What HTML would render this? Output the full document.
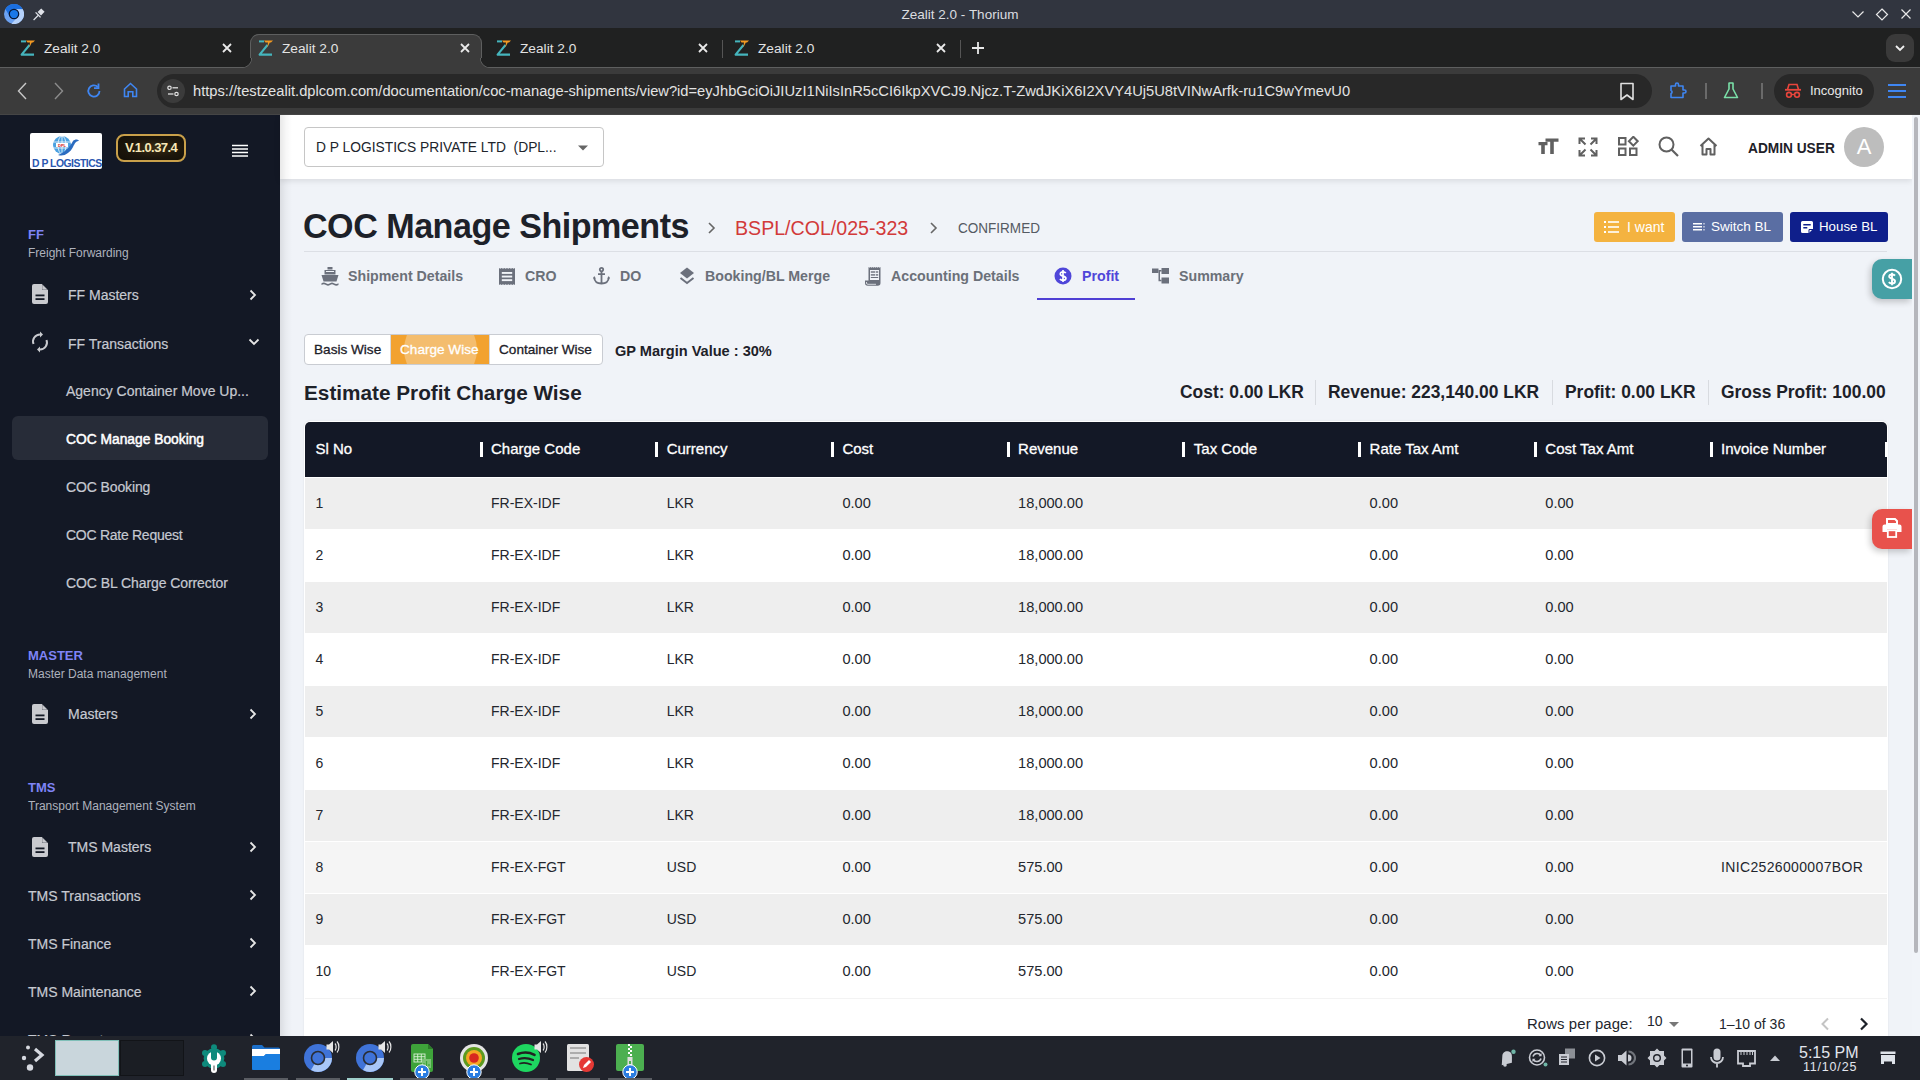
<!DOCTYPE html>
<html><head><meta charset="utf-8">
<style>
*{margin:0;padding:0;box-sizing:border-box}
html,body{width:1920px;height:1080px;overflow:hidden;background:#f0f3f8;font-family:"Liberation Sans",sans-serif}
.a{position:absolute}
.nw{white-space:nowrap}
/* chrome */
#titlebar{left:0;top:0;width:1920px;height:28px;background:#31353f}
#tabstrip{left:0;top:28px;width:1920px;height:40px;background:#202121}
#toolbar{left:0;top:68px;width:1920px;height:46px;background:#3b3b3b}
#page{left:0;top:114px;width:1920px;height:922px;background:#f0f3f8;overflow:hidden}
#taskbar{left:0;top:1036px;width:1920px;height:44px;background:#20232b}
#sidebar{left:0;top:0;width:280px;height:922px;background:#131825}
#header{left:280px;top:0;width:1632px;height:65px;background:#fff;box-shadow:0 2px 6px rgba(0,0,0,.10)}
.si{color:#c6c9d1;font-size:14px;line-height:16px;-webkit-text-stroke-width:0.2px}
.sec{color:#7f84f7;font-size:13px;font-weight:bold;line-height:15px}
.sub{color:#aeb2bd;font-size:12px;line-height:14px}
.tb{color:#6b7079;font-size:14.2px;font-weight:bold;line-height:20px}
.btn{border-radius:3px;height:30px}
.bt{color:#fff;font-size:14px;line-height:18px}
.sg{color:#1d2129;font-size:13.6px;line-height:16px;-webkit-text-stroke-width:0.3px}
.sm{color:#1d2129;font-size:19px;font-weight:bold;line-height:22px;transform:scaleX(0.917);transform-origin:0 0}
.th{color:#fff;font-size:15px;line-height:18px;-webkit-text-stroke-width:0.3px}
.td{color:#23262d;font-size:14px;line-height:18px}
.n{font-size:14.6px}
</style></head>
<body>

<div id="titlebar" class="a">
  <svg class="a" style="left:4px;top:4px" width="20" height="20" viewBox="0 0 20 20"><circle cx="10" cy="10" r="10" fill="#6ca2f2"/><path d="M10 5.2 L18.77 5.2 A10 10 0 0 0 1.34 5 L5.9 12.5Z" fill="#1b6fe0"/><path d="M10 5.2 L18.77 5.2 A10 10 0 0 1 7.4 19.65 L14.2 12.4Z" fill="#b5d1fa"/><circle cx="10" cy="10" r="4.7" fill="#1a78e8" stroke="#061633" stroke-width="1.2"/></svg>
  <svg class="a" style="left:32px;top:6px" width="14" height="16" viewBox="0 0 14 16"><path d="M9.2 2.4 L12.6 5.8 L9 9.4 L5.6 6Z" fill="#dfe2e8"/><path d="M3.6 6.4 L8.6 11.4" stroke="#dfe2e8" stroke-width="1.3"/><path d="M6.6 9 L1.6 14" stroke="#dfe2e8" stroke-width="1.2"/></svg>
  <div class="a nw" style="left:0;width:1920px;top:7px;text-align:center;color:#dcdde0;font-size:13.5px;line-height:16px">Zealit 2.0 - Thorium</div>
  <svg class="a" style="left:1850px;top:8px" width="64" height="14" viewBox="0 0 64 14"><path d="M2.5 3.5 L8 9 L13.5 3.5" fill="none" stroke="#e8e8e8" stroke-width="1.2"/><path d="M32 1 L37.5 6.5 L32 12 L26.5 6.5 Z" fill="none" stroke="#e8e8e8" stroke-width="1.2"/><path d="M51.5 1.5 L60.5 10.5 M60.5 1.5 L51.5 10.5" stroke="#e8e8e8" stroke-width="1.2"/></svg>
</div>
<div id="tabstrip" class="a">
  <div class="a" style="left:0;top:39px;width:1920px;height:1px;background:#5e5f5f"></div>
  <div class="a" style="left:250px;top:6px;width:232px;height:34px;background:#3b3b3b;border:1px solid #5e5f5f;border-bottom:none;border-radius:9px 9px 0 0"></div>
  <div class="a" style="left:242px;top:30px;width:10px;height:10px;background:radial-gradient(circle at 0 0,#202121 9px,#5e5f5f 9.5px,#3b3b3b 10.5px)"></div>
  <div class="a" style="left:480px;top:30px;width:10px;height:10px;background:radial-gradient(circle at 100% 0,#202121 9px,#5e5f5f 9.5px,#3b3b3b 10.5px)"></div>
  <div class="a" style="left:251px;top:38px;width:230px;height:2px;background:#3b3b3b"></div>
  <svg class="a" style="left:20px;top:12px" width="18" height="16" viewBox="0 0 18 16"><path d="M1 1.4 H6" stroke="#45b5bd" stroke-width="2"/><path d="M9.5 5 L1.6 14.6 H14" fill="none" stroke="#45b5bd" stroke-width="2.1" stroke-linejoin="round"/><path d="M6 0.4 H15 L13 2.6 H11.8 L9.3 7.5 L10 2.6 H7.5Z" fill="#f39a22"/></svg>
  <div class="a nw" style="left:44px;top:12px;color:#e3e3e3;font-size:13.7px;line-height:18px">Zealit 2.0</div>
  <svg class="a" style="left:221px;top:14px" width="12" height="12" viewBox="0 0 12 12"><path d="M2 2 L10 10 M10 2 L2 10" stroke="#eaeaea" stroke-width="1.8"/></svg>
<svg class="a" style="left:258px;top:12px" width="18" height="16" viewBox="0 0 18 16"><path d="M1 1.4 H6" stroke="#45b5bd" stroke-width="2"/><path d="M9.5 5 L1.6 14.6 H14" fill="none" stroke="#45b5bd" stroke-width="2.1" stroke-linejoin="round"/><path d="M6 0.4 H15 L13 2.6 H11.8 L9.3 7.5 L10 2.6 H7.5Z" fill="#f39a22"/></svg>
  <div class="a nw" style="left:282px;top:12px;color:#e3e3e3;font-size:13.7px;line-height:18px">Zealit 2.0</div>
  <svg class="a" style="left:459px;top:14px" width="12" height="12" viewBox="0 0 12 12"><path d="M2 2 L10 10 M10 2 L2 10" stroke="#eaeaea" stroke-width="1.8"/></svg>
<svg class="a" style="left:496px;top:12px" width="18" height="16" viewBox="0 0 18 16"><path d="M1 1.4 H6" stroke="#45b5bd" stroke-width="2"/><path d="M9.5 5 L1.6 14.6 H14" fill="none" stroke="#45b5bd" stroke-width="2.1" stroke-linejoin="round"/><path d="M6 0.4 H15 L13 2.6 H11.8 L9.3 7.5 L10 2.6 H7.5Z" fill="#f39a22"/></svg>
  <div class="a nw" style="left:520px;top:12px;color:#e3e3e3;font-size:13.7px;line-height:18px">Zealit 2.0</div>
  <svg class="a" style="left:697px;top:14px" width="12" height="12" viewBox="0 0 12 12"><path d="M2 2 L10 10 M10 2 L2 10" stroke="#eaeaea" stroke-width="1.8"/></svg>
<svg class="a" style="left:734px;top:12px" width="18" height="16" viewBox="0 0 18 16"><path d="M1 1.4 H6" stroke="#45b5bd" stroke-width="2"/><path d="M9.5 5 L1.6 14.6 H14" fill="none" stroke="#45b5bd" stroke-width="2.1" stroke-linejoin="round"/><path d="M6 0.4 H15 L13 2.6 H11.8 L9.3 7.5 L10 2.6 H7.5Z" fill="#f39a22"/></svg>
  <div class="a nw" style="left:758px;top:12px;color:#e3e3e3;font-size:13.7px;line-height:18px">Zealit 2.0</div>
  <svg class="a" style="left:935px;top:14px" width="12" height="12" viewBox="0 0 12 12"><path d="M2 2 L10 10 M10 2 L2 10" stroke="#eaeaea" stroke-width="1.8"/></svg>

  <div class="a" style="left:722px;top:12px;width:1px;height:18px;background:#555"></div>
  <div class="a" style="left:960px;top:12px;width:1px;height:18px;background:#555"></div>
  <svg class="a" style="left:970px;top:12px" width="16" height="16" viewBox="0 0 16 16"><path d="M8 2 V14 M2 8 H14" stroke="#e8e8e8" stroke-width="1.8"/></svg>
  <div class="a" style="left:1886px;top:6px;width:28px;height:28px;background:#3a3a3a;border-radius:9px"></div>
  <svg class="a" style="left:1893px;top:13px" width="14" height="14" viewBox="0 0 14 14"><path d="M3 5 L7 9 L11 5" fill="none" stroke="#f0f0f0" stroke-width="1.8"/></svg>
</div>
<div id="toolbar" class="a">
  <svg class="a" style="left:14px;top:13px" width="18" height="20" viewBox="0 0 18 20"><path d="M12 2 L4.5 10 L12 18" fill="none" stroke="#c8c8c8" stroke-width="1.4"/></svg>
  <svg class="a" style="left:50px;top:13px" width="18" height="20" viewBox="0 0 18 20"><path d="M5 2 L12.5 10 L5 18" fill="none" stroke="#8c8c8c" stroke-width="1.4"/></svg>
  <svg class="a" style="left:85px;top:14px" width="18" height="18" viewBox="0 0 18 18"><path d="M14.5 9 A5.6 5.6 0 1 1 12.8 5" fill="none" stroke="#3f86f2" stroke-width="1.8"/><path d="M13.5 1.5 V6.2 H9" fill="none" stroke="#3f86f2" stroke-width="1.8"/></svg>
  <svg class="a" style="left:121px;top:13px" width="18" height="18" viewBox="0 0 18 18"><path d="M3.5 15.5 V8 L9.5 2.5 L15.5 8 V15.5 H11.8 V10.8 H7.2 V15.5 Z" fill="none" stroke="#3f86f2" stroke-width="1.6" stroke-linejoin="miter"/></svg>
  <div class="a" style="left:157px;top:6px;width:1495px;height:34px;background:#282828;border-radius:17px"></div>
  <div class="a" style="left:161px;top:11px;width:24px;height:24px;background:#3b3b3b;border-radius:12px"></div>
  <svg class="a" style="left:166px;top:16px" width="14" height="14" viewBox="0 0 14 14"><circle cx="3.5" cy="3.8" r="1.7" fill="none" stroke="#e0e0e0" stroke-width="1.2"/><path d="M6.5 3.8 H12" stroke="#e0e0e0" stroke-width="1.3"/><circle cx="10.5" cy="10" r="1.7" fill="none" stroke="#e0e0e0" stroke-width="1.2"/><path d="M2 10 H7.5" stroke="#e0e0e0" stroke-width="1.3"/></svg>
  <div class="a nw" style="left:193px;top:14px;color:#e3e3e3;font-size:14.7px;line-height:18px">https://testzealit.dplcom.com/documentation/coc-manage-shipments/view?id=eyJhbGciOiJIUzI1NiIsInR5cCI6IkpXVCJ9.Njcz.T-ZwdJKiX6I2XVY4Uj5U8tVINwArfk-ru1C9wYmevU0</div>
  <svg class="a" style="left:1619px;top:14px" width="16" height="20" viewBox="0 0 16 20"><path d="M2 1.5 H14 V17.5 L8 13 L2 17.5 Z" fill="none" stroke="#e0e0e0" stroke-width="1.6" stroke-linejoin="round"/></svg>
  <svg class="a" style="left:1668px;top:13px" width="20" height="20" viewBox="0 0 20 20"><path d="M3 5 H7.5 V3.5 A1.5 1.5 0 0 1 10.5 3.5 V5 H15 V9 H16.5 A1.5 1.5 0 0 1 16.5 12 H15 V16.5 H3 V12.5 A1.6 1.6 0 0 0 3 9.5 Z" fill="none" stroke="#3f86f2" stroke-width="1.6" stroke-linejoin="round"/></svg>
  <div class="a" style="left:1705px;top:15px;width:2px;height:16px;background:#6a6a6a"></div>
  <svg class="a" style="left:1722px;top:13px" width="18" height="20" viewBox="0 0 18 20"><path d="M6.5 2 H11.5 M7 2 V8 L2.5 16.5 H15.5 L11 8 V2" fill="none" stroke="#7ae0a8" stroke-width="1.6" stroke-linejoin="round"/></svg>
  <div class="a" style="left:1761px;top:15px;width:2px;height:16px;background:#6a6a6a"></div>
  <div class="a" style="left:1774px;top:6px;width:100px;height:34px;background:#282828;border-radius:17px"></div>
  <svg class="a" style="left:1784px;top:14px" width="18" height="18" viewBox="0 0 18 18"><path d="M3.5 7.5 L5 2.5 H13 L14.5 7.5" fill="none" stroke="#e8453c" stroke-width="1.6"/><path d="M1 7.8 H17" stroke="#e8453c" stroke-width="1.8"/><circle cx="5" cy="12.8" r="2.4" fill="none" stroke="#e8453c" stroke-width="1.6"/><circle cx="13" cy="12.8" r="2.4" fill="none" stroke="#e8453c" stroke-width="1.6"/><path d="M7.4 12.5 H10.6" stroke="#e8453c" stroke-width="1.4"/></svg>
  <div class="a nw" style="left:1810px;top:14px;color:#e8e8e8;font-size:13px;line-height:18px">Incognito</div>
  <svg class="a" style="left:1887px;top:14px" width="20" height="18" viewBox="0 0 20 18"><path d="M1 3 H19 M1 9 H19 M1 15 H19" stroke="#3f86f2" stroke-width="1.8"/></svg>
</div>

<div id="page" class="a">
  <div id="sidebar" class="a">
<div class="a" style="left:30px;top:19px;width:72px;height:36px;background:#fff;border-radius:2px"></div>
<svg class="a" style="left:46px;top:21px" width="36" height="24" viewBox="0 0 36 24"><circle cx="16" cy="10" r="9" fill="#4aa0e0"/><g stroke="#fff" stroke-width="0.8" fill="none"><ellipse cx="16" cy="10" rx="4" ry="9"/><path d="M7 7 H25 M7 13 H25 M16 1 V19"/></g><rect x="10" y="8" width="12" height="4" fill="#fff"/><text x="16" y="11.5" font-size="4" fill="#d02020" text-anchor="middle" font-family="Liberation Sans" font-weight="bold">DPL</text><path d="M12 20 C18 18 24 12 27 6 C29 4 32 4 33 6 C30 6 29 8 27 12 C24 18 18 22 12 20Z" fill="#2b6cc0"/></svg>
<div class="a nw" style="left:32px;top:43px;color:#2a57b0;font-size:10.5px;font-weight:bold;line-height:12px;letter-spacing:-0.5px;transform:scaleX(0.99);transform-origin:0 0">D P LOGISTICS</div>
<div class="a" style="left:116px;top:20px;width:70px;height:28px;border:2px solid #c9a04a;border-radius:8px;background:radial-gradient(ellipse at 55% 50%,#3a2d14 0%,#1c160b 55%,#120f08 100%)"></div>
<div class="a nw" style="left:116px;top:26px;width:70px;text-align:center;color:#f7e8b8;font-size:13px;font-weight:bold;line-height:16px;letter-spacing:-0.6px">V.1.0.37.4</div>
<svg class="a" style="left:232px;top:30px" width="16" height="14" viewBox="0 0 16 14"><path d="M0 1.5 H16 M0 5 H16 M0 8.5 H16 M0 12 H16" stroke="#fff" stroke-width="1.6"/></svg>
<div class="a nw sec" style="left:28px;top:113px">FF</div><div class="a nw sub" style="left:28px;top:132px">Freight Forwarding</div><svg class="a" style="left:32px;top:170px" width="16" height="20" viewBox="0 0 16 20"><path d="M2 0 H10 L16 6 V18 A2 2 0 0 1 14 20 H2 A2 2 0 0 1 0 18 V2 A2 2 0 0 1 2 0Z" fill="#c9cacf"/><path d="M10 0 V6 H16" fill="#131825"/><path d="M10.2 0.5 L15.5 5.8 H10.2Z" fill="#c9cacf"/><rect x="3.5" y="10.5" width="9" height="1.8" fill="#131825"/><rect x="3.5" y="14.2" width="9" height="1.8" fill="#131825"/></svg><div class="a nw si" style="left:68px;top:173px">FF Masters</div><svg class="a" style="left:249px;top:175px" width="8" height="12" viewBox="0 0 8 12"><path d="M1.5 1.5 L6 6 L1.5 10.5" fill="none" stroke="#e6e6e6" stroke-width="1.8"/></svg><svg class="a" style="left:31px;top:217px" width="18" height="22" viewBox="0 0 18 22"><path d="M9 3.5 A7 7 0 0 0 2.5 13" fill="none" stroke="#c9cacf" stroke-width="2"/><path d="M9 0.5 L12 3.5 L9 6.5Z" fill="#c9cacf"/><path d="M9 18.5 A7 7 0 0 0 15.5 9" fill="none" stroke="#c9cacf" stroke-width="2"/><path d="M9 15.5 L6 18.5 L9 21.5Z" fill="#c9cacf"/></svg><div class="a nw si" style="left:68px;top:222px">FF Transactions</div><svg class="a" style="left:248px;top:224px" width="12" height="8" viewBox="0 0 12 8"><path d="M1.5 1.5 L6 6 L10.5 1.5" fill="none" stroke="#e6e6e6" stroke-width="1.8"/></svg><div class="a nw si" style="left:66px;top:269px">Agency Container Move Up...</div><div class="a" style="left:12px;top:302px;width:256px;height:44px;background:#272c38;border-radius:6px"></div><div class="a nw si" style="left:66px;top:318px;color:#fff;font-size:13.8px;-webkit-text-stroke-width:0.5px;letter-spacing:0px">COC Manage Booking</div><div class="a nw si" style="left:66px;top:365px;letter-spacing:-0.12px">COC Booking</div><div class="a nw si" style="left:66px;top:413px;letter-spacing:-0.27px">COC Rate Request</div><div class="a nw si" style="left:66px;top:461px;letter-spacing:-0.08px">COC BL Charge Corrector</div><div class="a nw sec" style="left:28px;top:534px">MASTER</div><div class="a nw sub" style="left:28px;top:553px">Master Data management</div><svg class="a" style="left:32px;top:590px" width="16" height="20" viewBox="0 0 16 20"><path d="M2 0 H10 L16 6 V18 A2 2 0 0 1 14 20 H2 A2 2 0 0 1 0 18 V2 A2 2 0 0 1 2 0Z" fill="#c9cacf"/><path d="M10 0 V6 H16" fill="#131825"/><path d="M10.2 0.5 L15.5 5.8 H10.2Z" fill="#c9cacf"/><rect x="3.5" y="10.5" width="9" height="1.8" fill="#131825"/><rect x="3.5" y="14.2" width="9" height="1.8" fill="#131825"/></svg><div class="a nw si" style="left:68px;top:592px">Masters</div><svg class="a" style="left:249px;top:594px" width="8" height="12" viewBox="0 0 8 12"><path d="M1.5 1.5 L6 6 L1.5 10.5" fill="none" stroke="#e6e6e6" stroke-width="1.8"/></svg><div class="a nw sec" style="left:28px;top:666px">TMS</div><div class="a nw sub" style="left:28px;top:685px">Transport Management System</div><svg class="a" style="left:32px;top:723px" width="16" height="20" viewBox="0 0 16 20"><path d="M2 0 H10 L16 6 V18 A2 2 0 0 1 14 20 H2 A2 2 0 0 1 0 18 V2 A2 2 0 0 1 2 0Z" fill="#c9cacf"/><path d="M10 0 V6 H16" fill="#131825"/><path d="M10.2 0.5 L15.5 5.8 H10.2Z" fill="#c9cacf"/><rect x="3.5" y="10.5" width="9" height="1.8" fill="#131825"/><rect x="3.5" y="14.2" width="9" height="1.8" fill="#131825"/></svg><div class="a nw si" style="left:68px;top:725px">TMS Masters</div><svg class="a" style="left:249px;top:727px" width="8" height="12" viewBox="0 0 8 12"><path d="M1.5 1.5 L6 6 L1.5 10.5" fill="none" stroke="#e6e6e6" stroke-width="1.8"/></svg><div class="a nw si" style="left:28px;top:774px">TMS Transactions</div><svg class="a" style="left:249px;top:775px" width="8" height="12" viewBox="0 0 8 12"><path d="M1.5 1.5 L6 6 L1.5 10.5" fill="none" stroke="#e6e6e6" stroke-width="1.8"/></svg><div class="a nw si" style="left:28px;top:822px">TMS Finance</div><svg class="a" style="left:249px;top:823px" width="8" height="12" viewBox="0 0 8 12"><path d="M1.5 1.5 L6 6 L1.5 10.5" fill="none" stroke="#e6e6e6" stroke-width="1.8"/></svg><div class="a nw si" style="left:28px;top:870px">TMS Maintenance</div><svg class="a" style="left:249px;top:871px" width="8" height="12" viewBox="0 0 8 12"><path d="M1.5 1.5 L6 6 L1.5 10.5" fill="none" stroke="#e6e6e6" stroke-width="1.8"/></svg><div class="a nw si" style="left:28px;top:918px">TMS Reports</div><svg class="a" style="left:249px;top:919px" width="8" height="12" viewBox="0 0 8 12"><path d="M1.5 1.5 L6 6 L1.5 10.5" fill="none" stroke="#e6e6e6" stroke-width="1.8"/></svg></div>

  <div id="header" class="a">
  <div class="a" style="left:24px;top:13px;width:300px;height:40px;border:1px solid #c6c6c6;border-radius:4px;background:#fff"></div>
  <div class="a nw" style="left:36px;top:24px;color:#20242c;font-size:15px;line-height:18px;transform:scaleX(0.92);transform-origin:0 0">D P LOGISTICS PRIVATE LTD&nbsp;&nbsp;(DPL...</div>
  <svg class="a" style="left:297px;top:30px" width="12" height="8" viewBox="0 0 12 8"><path d="M1 1.5 H11 L6 6.5Z" fill="#666"/></svg>
  <svg class="a" style="left:1258px;top:24px" width="21" height="17" viewBox="0 0 21 17"><path d="M0.5 4 H9.5 V7.2 H6.8 V16 H3.2 V7.2 H0.5Z M7.5 0.5 H20.5 V3.8 H15.8 V16 H12.2 V3.8 H7.5Z" fill="#606060"/></svg>
  <svg class="a" style="left:1298px;top:23px" width="20" height="20" viewBox="0 0 20 20"><g fill="none" stroke="#606060" stroke-width="2"><path d="M1.5 7 V1.5 H7 M1.5 1.5 L7.5 7.5"/><path d="M18.5 7 V1.5 H13 M18.5 1.5 L12.5 7.5"/><path d="M1.5 13 V18.5 H7 M1.5 18.5 L7.5 12.5"/><path d="M18.5 13 V18.5 H13 M18.5 18.5 L12.5 12.5"/></g></svg>
  <svg class="a" style="left:1338px;top:22px" width="21" height="21" viewBox="0 0 21 21"><g fill="none" stroke="#606060" stroke-width="2"><rect x="1" y="2" width="6.5" height="6.5"/><rect x="1" y="12.5" width="6.5" height="6.5"/><rect x="12" y="12.5" width="6.5" height="6.5"/><path d="M15.3 0.8 L19.7 5.2 L15.3 9.6 L10.9 5.2Z"/></g></svg>
  <svg class="a" style="left:1378px;top:22px" width="21" height="21" viewBox="0 0 21 21"><circle cx="8.5" cy="8.5" r="7" fill="none" stroke="#606060" stroke-width="2"/><path d="M13.5 13.5 L20 20" stroke="#606060" stroke-width="2.2"/></svg>
  <svg class="a" style="left:1418px;top:23px" width="21" height="19" viewBox="0 0 21 19"><path d="M2.5 9 L10.5 1.5 L18.5 9 M4.5 7.5 V17.5 H8.5 V12 H12.5 V17.5 H16.5 V7.5" fill="none" stroke="#606060" stroke-width="2" stroke-linejoin="round"/></svg>
  <div class="a nw" style="left:1468px;top:25px;color:#1e2128;font-size:14.5px;font-weight:bold;line-height:18px;transform:scaleX(0.945);transform-origin:0 0">ADMIN USER</div>
  <div class="a" style="left:1564px;top:13px;width:40px;height:40px;border-radius:20px;background:#bdbdbd"></div>
  <div class="a nw" style="left:1564px;top:21px;width:40px;text-align:center;color:#fff;font-size:22px;line-height:24px">A</div>
</div>
<div id="content" class="a" style="left:0;top:0;width:1920px;height:922px">
  <div class="a nw" style="left:303px;top:92px;color:#1d2129;font-size:34.5px;font-weight:bold;line-height:40px;letter-spacing:-0.5px;transform:scaleX(0.988);transform-origin:0 0">COC Manage Shipments</div>
  <svg class="a" style="left:707px;top:108px" width="10" height="12" viewBox="0 0 10 12"><path d="M2 1 L7 6 L2 11" fill="none" stroke="#666" stroke-width="1.6"/></svg>
  <div class="a nw" style="left:735px;top:103px;color:#d23a3a;font-size:19.6px;line-height:22px">BSPL/COL/025-323</div>
  <svg class="a" style="left:929px;top:108px" width="10" height="12" viewBox="0 0 10 12"><path d="M2 1 L7 6 L2 11" fill="none" stroke="#666" stroke-width="1.6"/></svg>
  <div class="a nw" style="left:958px;top:104px;color:#555a63;font-size:15.5px;line-height:20px;transform:scaleX(0.873);transform-origin:0 0">CONFIRMED</div>
  <div class="a" style="left:304px;top:137px;width:1583px;height:1px;background:#dcdfe5"></div>
  <div class="a btn" style="left:1594px;top:98px;width:81px;background:#f4b340"></div>
  <svg class="a" style="left:1604px;top:107px" width="15" height="12" viewBox="0 0 15 12"><g fill="#fff"><rect x="0" y="0" width="2" height="2"/><rect x="0" y="5" width="2" height="2"/><rect x="0" y="10" width="2" height="2"/><rect x="4" y="0.2" width="11" height="1.6"/><rect x="4" y="5.2" width="11" height="1.6"/><rect x="4" y="10.2" width="11" height="1.6"/></g></svg>
  <div class="a nw bt" style="left:1627px;top:104px">I want</div>
  <div class="a btn" style="left:1682px;top:98px;width:101px;background:#5a6ea3"></div>
  <svg class="a" style="left:1693px;top:109px" width="12" height="8" viewBox="0 0 12 8"><g fill="#fff"><rect x="0" y="0" width="9" height="1.5"/><rect x="0" y="3" width="9" height="1.5"/><rect x="0" y="6" width="9" height="1.5"/><rect x="10.5" y="0" width="1" height="1.5"/><rect x="10.5" y="3" width="1" height="1.5"/><rect x="10.5" y="6" width="1" height="1.5"/></g></svg>
  <div class="a nw bt" style="left:1711px;top:104px;font-size:13.5px">Switch BL</div>
  <div class="a btn" style="left:1790px;top:98px;width:98px;background:#0f1f8b"></div>
  <svg class="a" style="left:1801px;top:107px" width="12" height="12" viewBox="0 0 12 12"><path d="M1.5 0 H10.5 A1.5 1.5 0 0 1 12 1.5 V8 L8 12 H1.5 A1.5 1.5 0 0 1 0 10.5 V1.5 A1.5 1.5 0 0 1 1.5 0Z" fill="#fff"/><rect x="2.3" y="3" width="7.4" height="1.5" fill="#0f1f8b"/><rect x="2.3" y="6" width="4" height="1.5" fill="#0f1f8b"/><path d="M8 12 V8.5 H12" fill="none" stroke="#0f1f8b" stroke-width="1"/></svg>
  <div class="a nw bt" style="left:1819px;top:104px;font-size:13.3px">House BL</div>

<svg class="a" style="left:321px;top:153px" width="18" height="19" viewBox="0 0 18 19"><g fill="#6b707c"><rect x="6.5" y="0" width="5" height="2.5"/><path d="M3.5 3 H14.5 V7.5 H3.5Z"/><path d="M0.5 8 H17.5 L15.5 14.5 H2.5Z"/><path d="M0.5 16.2 C2 15.2 3.5 15.2 5 16.2 C6.5 17.2 7.5 17.2 9 16.2 C10.5 15.2 11.5 15.2 13 16.2 C14.5 17.2 16 17.2 17.5 16.2 V18 C16 19 14.5 19 13 18 C11.5 17 10.5 17 9 18 C7.5 19 6.5 19 5 18 C3.5 17 2 17 0.5 18Z"/></g><path d="M5 4.5 H13" stroke="#f0f3f8" stroke-width="1"/></svg>
  <div class="a nw tb" style="left:348px;top:152px">Shipment Details</div>
  <svg class="a" style="left:499px;top:154px" width="16" height="17" viewBox="0 0 16 17"><path d="M0 0 L1.3 0.8 L2.6 0 L4 0.8 L5.3 0 L6.6 0.8 L8 0 L9.3 0.8 L10.6 0 L12 0.8 L13.3 0 L14.6 0.8 L16 0 V17 L14.6 16.2 L13.3 17 L12 16.2 L10.6 17 L9.3 16.2 L8 17 L6.6 16.2 L5.3 17 L4 16.2 L2.6 17 L1.3 16.2 L0 17Z" fill="#6b707c"/><g fill="#f0f3f8"><rect x="2.8" y="4" width="10.4" height="1.9"/><rect x="2.8" y="7.6" width="10.4" height="1.9"/><rect x="2.8" y="11.2" width="10.4" height="1.9"/></g></svg>
  <div class="a nw tb" style="left:525px;top:152px">CRO</div>
  <svg class="a" style="left:593px;top:153px" width="17" height="18" viewBox="0 0 17 18"><g fill="none" stroke="#6b707c" stroke-width="1.8"><circle cx="8.5" cy="2.6" r="1.7"/><path d="M8.5 4.3 V16.5 M5 7.2 H12 M1.2 10.5 C1.5 14.5 4.5 16.5 8.5 16.5 C12.5 16.5 15.5 14.5 15.8 10.5"/></g><path d="M0 11.5 L1.2 9 L2.8 11.5Z M14.2 11.5 L15.8 9 L17 11.5Z" fill="#6b707c"/></svg>
  <div class="a nw tb" style="left:620px;top:152px">DO</div>
  <svg class="a" style="left:679px;top:153px" width="16" height="18" viewBox="0 0 16 18"><path d="M8 0.5 L15 6 L8 11.5 L1 6Z" fill="#6b707c"/><path d="M1.5 11 L8 16 L14.5 11" fill="none" stroke="#6b707c" stroke-width="1.9"/></svg>
  <div class="a nw tb" style="left:705px;top:152px">Booking/BL Merge</div>
  <svg class="a" style="left:865px;top:153px" width="16" height="19" viewBox="0 0 16 19"><path d="M3.5 0 L4.5 0.8 L5.5 0 L6.5 0.8 L7.5 0 L8.5 0.8 L9.5 0 L10.5 0.8 L11.5 0 L12.5 0.8 L13.5 0 L14.5 0.8 L15.5 0 V16 A2.8 2.8 0 0 1 12.7 18.8 H2.8 A2.8 2.8 0 0 1 0 16 V13.5 H3.5Z" fill="#6b707c"/><rect x="5" y="3" width="9" height="10" fill="#f0f3f8"/><g fill="#6b707c"><rect x="5.8" y="4.3" width="4.5" height="1.4"/><rect x="11" y="4.3" width="2.2" height="1.4"/><rect x="5.8" y="7.2" width="4.5" height="1.4"/><rect x="11" y="7.2" width="2.2" height="1.4"/><rect x="5.8" y="10" width="7.4" height="1"/></g><path d="M1.5 15 V16 A1.3 1.3 0 0 0 2.8 17.3 H11" fill="none" stroke="#f0f3f8" stroke-width="0.8"/></svg>
  <div class="a nw tb" style="left:891px;top:152px">Accounting Details</div>
  <svg class="a" style="left:1054px;top:153px" width="18" height="18" viewBox="0 0 18 18"><circle cx="9" cy="9" r="8.5" fill="#4f46d9"/><path d="M11.8 6.2 C11.3 5.3 10.3 4.8 9 4.8 C7.4 4.8 6.3 5.6 6.3 6.9 C6.3 9.6 11.9 8.6 11.9 11.3 C11.9 12.6 10.7 13.3 9 13.3 C7.5 13.3 6.5 12.7 6 11.8 M9 3 V15" fill="none" stroke="#fff" stroke-width="1.7"/></svg>
  <div class="a nw tb" style="left:1082px;top:152px;color:#4f46d9">Profit</div>
  <div class="a" style="left:1037px;top:184px;width:98px;height:2px;background:#4f3fd4"></div>
  <svg class="a" style="left:1152px;top:154px" width="18" height="16" viewBox="0 0 18 16"><g fill="#6b707c"><rect x="0" y="0.5" width="6.5" height="4.5"/><rect x="9.5" y="0" width="7.5" height="6"/><rect x="9.5" y="9.5" width="7.5" height="6"/><path d="M6.5 2 H9.5 V3.5 H8 V11.8 H9.5 V13.3 H6.5Z"/></g></svg>
  <div class="a nw tb" style="left:1179px;top:152px">Summary</div>
<div class="a" style="left:304px;top:220px;width:299px;height:31px;border:1px solid #c9ccd2;border-radius:4px;background:#fff;overflow:hidden">
    <div class="a" style="left:86px;top:0;width:98px;height:29px;background:#f2a22f;overflow:hidden"><div class="a" style="left:13px;top:-22px;width:73px;height:73px;border-radius:50%;background:#f4bd6e"></div></div>
    <div class="a" style="left:85px;top:0;width:1px;height:29px;background:#d7d9dd"></div>
    <div class="a" style="left:184px;top:0;width:1px;height:29px;background:#d7d9dd"></div>
  </div>
  <div class="a nw sg" style="left:314px;top:228px">Basis Wise</div>
  <div class="a nw sg" style="left:400px;top:228px;color:#fff">Charge Wise</div>
  <div class="a nw sg" style="left:499px;top:228px">Container Wise</div>
  <div class="a nw" style="left:615px;top:228px;color:#1d2129;font-size:15.5px;font-weight:bold;line-height:18px;transform:scaleX(0.94);transform-origin:0 0">GP Margin Value : 30%</div>
  <div class="a nw" style="left:304px;top:267px;color:#1d2129;font-size:20.75px;font-weight:bold;line-height:24px">Estimate Profit Charge Wise</div>
  <div class="a nw sm" style="left:1180px;top:267px">Cost: 0.00 LKR</div>
  <div class="a" style="left:1315px;top:266px;width:1px;height:25px;background:#d8dbe0"></div>
  <div class="a nw sm" style="left:1328px;top:267px">Revenue: 223,140.00 LKR</div>
  <div class="a" style="left:1552px;top:266px;width:1px;height:25px;background:#d8dbe0"></div>
  <div class="a nw sm" style="left:1565px;top:267px">Profit: 0.00 LKR</div>
  <div class="a" style="left:1708px;top:266px;width:1px;height:25px;background:#d8dbe0"></div>
  <div class="a nw sm" style="left:1721px;top:267px">Gross Profit: 100.00</div>
<div class="a" style="left:304px;top:307px;width:1584px;height:640px;background:#fff;border-radius:6px 6px 0 0;box-shadow:0 0 2px rgba(0,0,0,.10)"></div>
<div class="a" style="left:305px;top:308px;width:1582px;height:55px;background:#131826;border-radius:5px 5px 0 0"></div>
<div class="a nw th" style="left:315.5px;top:326px">Sl No</div>
<div class="a" style="left:479.5px;top:328px;width:3px;height:15px;background:#fff"></div>
<div class="a nw th" style="left:491.0px;top:326px">Charge Code</div>
<div class="a" style="left:655.2px;top:328px;width:3px;height:15px;background:#fff"></div>
<div class="a nw th" style="left:666.7px;top:326px">Currency</div>
<div class="a" style="left:830.9px;top:328px;width:3px;height:15px;background:#fff"></div>
<div class="a nw th" style="left:842.4px;top:326px">Cost</div>
<div class="a" style="left:1006.6px;top:328px;width:3px;height:15px;background:#fff"></div>
<div class="a nw th" style="left:1018.1px;top:326px">Revenue</div>
<div class="a" style="left:1182.3px;top:328px;width:3px;height:15px;background:#fff"></div>
<div class="a nw th" style="left:1193.8px;top:326px">Tax Code</div>
<div class="a" style="left:1358.1px;top:328px;width:3px;height:15px;background:#fff"></div>
<div class="a nw th" style="left:1369.6px;top:326px">Rate Tax Amt</div>
<div class="a" style="left:1533.8px;top:328px;width:3px;height:15px;background:#fff"></div>
<div class="a nw th" style="left:1545.3px;top:326px">Cost Tax Amt</div>
<div class="a" style="left:1709.5px;top:328px;width:3px;height:15px;background:#fff"></div>
<div class="a nw th" style="left:1721.0px;top:326px">Invoice Number</div>
<div class="a" style="left:1885px;top:328px;width:2px;height:15px;background:#fff"></div>
<div class="a" style="left:305px;top:364px;width:1582px;height:51px;background:#eeeeee"></div>
<div class="a nw td" style="left:315.5px;top:380px">1</div>
<div class="a nw td" style="left:491.0px;top:380px">FR-EX-IDF</div>
<div class="a nw td" style="left:666.7px;top:380px">LKR</div>
<div class="a nw td n" style="left:842.4px;top:380px">0.00</div>
<div class="a nw td n" style="left:1018.1px;top:380px">18,000.00</div>
<div class="a nw td n" style="left:1369.6px;top:380px">0.00</div>
<div class="a nw td n" style="left:1545.3px;top:380px">0.00</div>
<div class="a" style="left:305px;top:416px;width:1582px;height:51px;background:#ffffff"></div>
<div class="a nw td" style="left:315.5px;top:432px">2</div>
<div class="a nw td" style="left:491.0px;top:432px">FR-EX-IDF</div>
<div class="a nw td" style="left:666.7px;top:432px">LKR</div>
<div class="a nw td n" style="left:842.4px;top:432px">0.00</div>
<div class="a nw td n" style="left:1018.1px;top:432px">18,000.00</div>
<div class="a nw td n" style="left:1369.6px;top:432px">0.00</div>
<div class="a nw td n" style="left:1545.3px;top:432px">0.00</div>
<div class="a" style="left:305px;top:468px;width:1582px;height:51px;background:#eeeeee"></div>
<div class="a nw td" style="left:315.5px;top:484px">3</div>
<div class="a nw td" style="left:491.0px;top:484px">FR-EX-IDF</div>
<div class="a nw td" style="left:666.7px;top:484px">LKR</div>
<div class="a nw td n" style="left:842.4px;top:484px">0.00</div>
<div class="a nw td n" style="left:1018.1px;top:484px">18,000.00</div>
<div class="a nw td n" style="left:1369.6px;top:484px">0.00</div>
<div class="a nw td n" style="left:1545.3px;top:484px">0.00</div>
<div class="a" style="left:305px;top:520px;width:1582px;height:51px;background:#ffffff"></div>
<div class="a nw td" style="left:315.5px;top:536px">4</div>
<div class="a nw td" style="left:491.0px;top:536px">FR-EX-IDF</div>
<div class="a nw td" style="left:666.7px;top:536px">LKR</div>
<div class="a nw td n" style="left:842.4px;top:536px">0.00</div>
<div class="a nw td n" style="left:1018.1px;top:536px">18,000.00</div>
<div class="a nw td n" style="left:1369.6px;top:536px">0.00</div>
<div class="a nw td n" style="left:1545.3px;top:536px">0.00</div>
<div class="a" style="left:305px;top:572px;width:1582px;height:51px;background:#eeeeee"></div>
<div class="a nw td" style="left:315.5px;top:588px">5</div>
<div class="a nw td" style="left:491.0px;top:588px">FR-EX-IDF</div>
<div class="a nw td" style="left:666.7px;top:588px">LKR</div>
<div class="a nw td n" style="left:842.4px;top:588px">0.00</div>
<div class="a nw td n" style="left:1018.1px;top:588px">18,000.00</div>
<div class="a nw td n" style="left:1369.6px;top:588px">0.00</div>
<div class="a nw td n" style="left:1545.3px;top:588px">0.00</div>
<div class="a" style="left:305px;top:624px;width:1582px;height:51px;background:#ffffff"></div>
<div class="a nw td" style="left:315.5px;top:640px">6</div>
<div class="a nw td" style="left:491.0px;top:640px">FR-EX-IDF</div>
<div class="a nw td" style="left:666.7px;top:640px">LKR</div>
<div class="a nw td n" style="left:842.4px;top:640px">0.00</div>
<div class="a nw td n" style="left:1018.1px;top:640px">18,000.00</div>
<div class="a nw td n" style="left:1369.6px;top:640px">0.00</div>
<div class="a nw td n" style="left:1545.3px;top:640px">0.00</div>
<div class="a" style="left:305px;top:676px;width:1582px;height:51px;background:#eeeeee"></div>
<div class="a nw td" style="left:315.5px;top:692px">7</div>
<div class="a nw td" style="left:491.0px;top:692px">FR-EX-IDF</div>
<div class="a nw td" style="left:666.7px;top:692px">LKR</div>
<div class="a nw td n" style="left:842.4px;top:692px">0.00</div>
<div class="a nw td n" style="left:1018.1px;top:692px">18,000.00</div>
<div class="a nw td n" style="left:1369.6px;top:692px">0.00</div>
<div class="a nw td n" style="left:1545.3px;top:692px">0.00</div>
<div class="a" style="left:305px;top:728px;width:1582px;height:51px;background:#f5f5f5"></div>
<div class="a nw td" style="left:315.5px;top:744px">8</div>
<div class="a nw td" style="left:491.0px;top:744px">FR-EX-FGT</div>
<div class="a nw td" style="left:666.7px;top:744px">USD</div>
<div class="a nw td n" style="left:842.4px;top:744px">0.00</div>
<div class="a nw td n" style="left:1018.1px;top:744px">575.00</div>
<div class="a nw td n" style="left:1369.6px;top:744px">0.00</div>
<div class="a nw td n" style="left:1545.3px;top:744px">0.00</div>
<div class="a nw td" style="left:1721.0px;top:744px;letter-spacing:0.35px">INIC2526000007BOR</div>
<div class="a" style="left:305px;top:780px;width:1582px;height:51px;background:#eeeeee"></div>
<div class="a nw td" style="left:315.5px;top:796px">9</div>
<div class="a nw td" style="left:491.0px;top:796px">FR-EX-FGT</div>
<div class="a nw td" style="left:666.7px;top:796px">USD</div>
<div class="a nw td n" style="left:842.4px;top:796px">0.00</div>
<div class="a nw td n" style="left:1018.1px;top:796px">575.00</div>
<div class="a nw td n" style="left:1369.6px;top:796px">0.00</div>
<div class="a nw td n" style="left:1545.3px;top:796px">0.00</div>
<div class="a" style="left:305px;top:832px;width:1582px;height:51px;background:#ffffff"></div>
<div class="a nw td" style="left:315.5px;top:848px">10</div>
<div class="a nw td" style="left:491.0px;top:848px">FR-EX-FGT</div>
<div class="a nw td" style="left:666.7px;top:848px">USD</div>
<div class="a nw td n" style="left:842.4px;top:848px">0.00</div>
<div class="a nw td n" style="left:1018.1px;top:848px">575.00</div>
<div class="a nw td n" style="left:1369.6px;top:848px">0.00</div>
<div class="a nw td n" style="left:1545.3px;top:848px">0.00</div>
<div class="a nw td" style="left:1527px;top:901px;font-size:14.9px;letter-spacing:0.1px">Rows per page:</div>
<div class="a" style="left:305px;top:884px;width:1582px;height:1px;background:#f3f3f3"></div>
<div class="a nw td" style="left:1647px;top:898px">10</div>
<svg class="a" style="left:1668px;top:907px" width="12" height="7" viewBox="0 0 12 7"><path d="M1 1 H11 L6 6Z" fill="#777"/></svg>
<div class="a nw td" style="left:1719px;top:901px">1–10 of 36</div>
<svg class="a" style="left:1819px;top:903px" width="12" height="14" viewBox="0 0 12 14"><path d="M9 1.5 L3.5 7 L9 12.5" fill="none" stroke="#c4c4c4" stroke-width="2"/></svg>
<svg class="a" style="left:1858px;top:903px" width="12" height="14" viewBox="0 0 12 14"><path d="M3 1.5 L8.5 7 L3 12.5" fill="none" stroke="#1d2129" stroke-width="2.2"/></svg>
<div class="a" style="left:1872px;top:145px;width:40px;height:40px;background:#46a0a5;border-radius:10px 0 0 10px;box-shadow:-2px 3px 6px rgba(0,0,0,.2)"></div>
<svg class="a" style="left:1881px;top:154px" width="22" height="22" viewBox="0 0 22 22"><circle cx="11" cy="11" r="9.2" fill="none" stroke="#fff" stroke-width="2"/><path d="M14 7.6 C13.3 6.8 12.3 6.5 11 6.5 C9.3 6.5 8.2 7.3 8.2 8.6 C8.2 11.3 14 10.2 14 13.2 C14 14.6 12.8 15.5 11 15.5 C9.6 15.5 8.5 15 7.8 14.2 M11 4.8 V17.2" fill="none" stroke="#fff" stroke-width="1.9"/></svg>
<div class="a" style="left:1872px;top:395px;width:40px;height:40px;background:#e8524c;border-radius:10px 0 0 10px;box-shadow:-2px 3px 6px rgba(0,0,0,.2)"></div>
<svg class="a" style="left:1882px;top:404px" width="20" height="20" viewBox="0 0 20 20"><path d="M5 1 H13 L15 3 V6 H5Z" fill="none" stroke="#fff" stroke-width="2"/><path d="M2.5 6.5 H17.5 A2 2 0 0 1 19.5 8.5 V14 H15 V11.5 H5 V14 H0.5 V8.5 A2 2 0 0 1 2.5 6.5Z" fill="#fff"/><rect x="5.8" y="12.3" width="8.4" height="6.7" fill="none" stroke="#fff" stroke-width="1.8"/></svg>
</div>
<div class="a" style="left:1912px;top:0;width:8px;height:922px;background:#f1f4f9"></div>
<div class="a" style="left:1914px;top:3px;width:4px;height:836px;background:#b5b6bc;border-radius:2px"></div>
<div class="a" style="left:280px;top:0;width:12px;height:922px;background:linear-gradient(90deg,rgba(0,0,0,.09),rgba(0,0,0,.03) 50%,rgba(0,0,0,0))"></div>
<div class="a" style="left:0;top:0;width:1920px;height:1px;background:#454545"></div>

</div>
<div id="taskbar" class="a">
<svg class="a" style="left:20px;top:8px" width="28" height="28" viewBox="0 0 28 28"><circle cx="8" cy="3.5" r="2" fill="#d6d9e0"/><circle cx="4" cy="14" r="2.2" fill="#d6d9e0"/><circle cx="10" cy="23.5" r="3.2" fill="#d6d9e0"/><path d="M15 5 L22 11 L15 17" fill="none" stroke="#d6d9e0" stroke-width="3.2"/></svg>
<div class="a" style="left:55px;top:4px;width:64px;height:36px;background:#c9d6dc;border:1px solid #7fbfb8"></div>
<div class="a" style="left:120px;top:4px;width:64px;height:36px;background:#1b1e24;border:1px solid #121418"></div>
<svg class="a" style="left:200px;top:7px" width="28" height="30" viewBox="0 0 28 30"><g fill="#0e8a7c"><circle cx="14" cy="15.5" r="10.3"/><circle cx="14" cy="4.2" r="3"/><circle cx="5" cy="10" r="3"/><circle cx="23" cy="10" r="3"/><circle cx="5" cy="21" r="3"/><circle cx="23" cy="21" r="3"/></g><circle cx="14" cy="15.5" r="7" fill="#fff"/><path d="M11 6 H17 V14.5 A3 3 0 0 1 11 14.5Z" fill="#0e8a7c"/><path d="M11 21 H17 V27 A3 3 0 0 1 11 27Z" fill="#fff"/><rect x="13.2" y="22.5" width="1.6" height="5" fill="#8a8a8a"/></svg>
<svg class="a" style="left:252px;top:9px" width="28" height="25" viewBox="0 0 28 25"><path d="M1.5 0 H10 L12.5 2.5 H26.5 A1.5 1.5 0 0 1 28 4 V23.5 A1.5 1.5 0 0 1 26.5 25 H1.5 A1.5 1.5 0 0 1 0 23.5 V1.5 A1.5 1.5 0 0 1 1.5 0Z" fill="#1c6fc9"/><path d="M0 4 H28 V9 H14 L12 11 H0Z" fill="#fff"/><path d="M0 11 H12 L14 9 H28 V23.5 A1.5 1.5 0 0 1 26.5 25 H1.5 A1.5 1.5 0 0 1 0 23.5Z" fill="#1a7ee0"/></svg>
<svg class="a" style="left:304px;top:8px" width="28" height="28" viewBox="0 0 28 28"><circle cx="14" cy="14" r="14" fill="#3f73d8"/><path d="M14 14 L28 14 A14 14 0 0 1 7 26.1Z" fill="#a9c7f7"/><circle cx="14" cy="14" r="6.5" fill="#3f73d8" stroke="#2a2d33" stroke-width="1.6"/></svg><svg class="a" style="left:326px;top:4px" width="14" height="14" viewBox="0 0 14 14"><path d="M0.5 4.5 H3 L7 1 V13 L3 9.5 H0.5Z" fill="#e6e6e6"/><path d="M9 3.5 C10.5 5 10.5 9 9 10.5 M11 1.5 C13.5 4 13.5 10 11 12.5" fill="none" stroke="#e6e6e6" stroke-width="1.2"/></svg>
<svg class="a" style="left:356px;top:8px" width="28" height="28" viewBox="0 0 28 28"><circle cx="14" cy="14" r="14" fill="#3f73d8"/><path d="M14 14 L28 14 A14 14 0 0 1 7 26.1Z" fill="#a9c7f7"/><circle cx="14" cy="14" r="6.5" fill="#3f73d8" stroke="#2a2d33" stroke-width="1.6"/></svg><svg class="a" style="left:378px;top:4px" width="14" height="14" viewBox="0 0 14 14"><path d="M0.5 4.5 H3 L7 1 V13 L3 9.5 H0.5Z" fill="#e6e6e6"/><path d="M9 3.5 C10.5 5 10.5 9 9 10.5 M11 1.5 C13.5 4 13.5 10 11 12.5" fill="none" stroke="#e6e6e6" stroke-width="1.2"/></svg>
<svg class="a" style="left:411px;top:8px" width="22" height="28" viewBox="0 0 22 28"><path d="M2 0 H17 L22 5 V26 A2 2 0 0 1 20 28 H2 A2 2 0 0 1 0 26 V2 A2 2 0 0 1 2 0Z" fill="#3ea33a"/><path d="M17 0 L22 5 H17Z" fill="#2b7a28"/><g fill="none" stroke="#d8efd6" stroke-width="0.9"><rect x="3" y="10" width="11" height="8"/><path d="M3 12.7 H14 M3 15.3 H14 M6.7 10 V18 M10.3 10 V18"/></g><rect x="11" y="15" width="9" height="9" fill="#7cc576"/><path d="M13 22 V19 M15.5 22 V17 M18 22 V20" stroke="#3ea33a" stroke-width="1.2"/></svg><svg class="a" style="left:414px;top:28px" width="16" height="16" viewBox="0 0 16 16"><circle cx="8" cy="8" r="7.2" fill="#2a7de1" stroke="#fff" stroke-width="1"/><path d="M8 4 V12 M4 8 H12" stroke="#fff" stroke-width="2"/></svg>
<svg class="a" style="left:460px;top:8px" width="28" height="28" viewBox="0 0 28 28"><circle cx="14" cy="14" r="14" fill="#e4e4e4"/><circle cx="14" cy="14" r="11" fill="#5c9a1e"/><circle cx="14" cy="14" r="8" fill="#f5a623"/><circle cx="14" cy="14" r="4.8" fill="#d8281f"/></svg><svg class="a" style="left:466px;top:28px" width="16" height="16" viewBox="0 0 16 16"><circle cx="8" cy="8" r="7.2" fill="#2a7de1" stroke="#fff" stroke-width="1"/><path d="M8 4 V12 M4 8 H12" stroke="#fff" stroke-width="2"/></svg>
<svg class="a" style="left:512px;top:8px" width="28" height="28" viewBox="0 0 28 28"><circle cx="14" cy="14" r="14" fill="#1ed760"/><g fill="none" stroke="#222" stroke-linecap="round"><path d="M6 10 C11 8 17 8 22.5 10.8" stroke-width="2.6"/><path d="M7 15 C11.5 13.5 16 13.7 21 16" stroke-width="2.2"/><path d="M8 19.5 C11.5 18.5 15 18.7 19 20.5" stroke-width="1.8"/></g></svg><svg class="a" style="left:534px;top:4px" width="14" height="14" viewBox="0 0 14 14"><path d="M0.5 4.5 H3 L7 1 V13 L3 9.5 H0.5Z" fill="#e6e6e6"/><path d="M9 3.5 C10.5 5 10.5 9 9 10.5 M11 1.5 C13.5 4 13.5 10 11 12.5" fill="none" stroke="#e6e6e6" stroke-width="1.2"/></svg>
<svg class="a" style="left:567px;top:8px" width="28" height="28" viewBox="0 0 28 28"><rect x="0" y="0" width="22" height="27" rx="1.5" fill="#e2e2e2"/><path d="M3 4 H19 M3 9 H19 M3 14 H12" stroke="#9a9a9a" stroke-width="1.4"/><circle cx="19.5" cy="20.5" r="7.5" fill="#e53935"/><path d="M16 24 L17 21 L22 16 L24 18 L19 23Z" fill="#fff"/></svg>
<svg class="a" style="left:616px;top:8px" width="28" height="28" viewBox="0 0 28 28"><rect x="0" y="0" width="28" height="27" rx="2" fill="#4caf50"/><g fill="#fff"><rect x="12" y="0" width="2" height="2"/><rect x="14" y="2" width="2" height="2"/><rect x="12" y="4" width="2" height="2"/><rect x="14" y="6" width="2" height="2"/><rect x="12" y="8" width="2" height="2"/><rect x="14" y="10" width="2" height="2"/></g><path d="M11.5 13 H16.5 V21 A2.5 2.5 0 0 1 11.5 21Z" fill="#ddd"/><rect x="13" y="17" width="2" height="3" fill="#4caf50"/></svg><svg class="a" style="left:622px;top:28px" width="16" height="16" viewBox="0 0 16 16"><circle cx="8" cy="8" r="7.2" fill="#2a7de1" stroke="#fff" stroke-width="1"/><path d="M8 4 V12 M4 8 H12" stroke="#fff" stroke-width="2"/></svg>
<div class="a" style="left:244px;top:42px;width:44px;height:2px;background:#5a5d63"></div>
<div class="a" style="left:296px;top:42px;width:44px;height:2px;background:#5a5d63"></div>
<div class="a" style="left:347px;top:42px;width:46px;height:2px;background:#9fcfcb"></div>
<div class="a" style="left:400px;top:42px;width:44px;height:2px;background:#5a5d63"></div>
<div class="a" style="left:452px;top:42px;width:44px;height:2px;background:#5a5d63"></div>
<div class="a" style="left:504px;top:42px;width:44px;height:2px;background:#5a5d63"></div>
<div class="a" style="left:556px;top:42px;width:44px;height:2px;background:#5a5d63"></div>
<div class="a" style="left:608px;top:42px;width:44px;height:2px;background:#5a5d63"></div>
<svg class="a" style="left:1497px;top:13px" width="20" height="18" viewBox="0 0 20 18"><path d="M3 15 L6 6 C7 2.5 11 1.5 13.5 3.5 C15.5 5 15.8 7 15 9.5 L13.5 15Z" fill="#c9ccd3" transform="rotate(-15 9 9)"/><circle cx="8" cy="16" r="1.8" fill="#c9ccd3"/><circle cx="16.5" cy="2.8" r="2.2" fill="#6fb5a6"/></svg>
<svg class="a" style="left:1528px;top:13px" width="20" height="18" viewBox="0 0 20 18"><circle cx="9" cy="8.5" r="7.5" fill="none" stroke="#c9ccd3" stroke-width="1.6"/><path d="M5 7.5 A4.5 4.5 0 0 1 13 6.5 M13 9.5 A4.5 4.5 0 0 1 5 10.5" fill="none" stroke="#c9ccd3" stroke-width="1.6"/><path d="M13.5 4 V7.2 H10.5Z M4.5 13 V9.8 H7.5Z" fill="#c9ccd3"/><circle cx="17.5" cy="15.5" r="2" fill="#6fb5a6"/></svg>
<svg class="a" style="left:1558px;top:12px" width="18" height="18" viewBox="0 0 18 18"><rect x="7" y="0.5" width="10" height="10" fill="#8c9096"/><rect x="1" y="6" width="10" height="11" fill="#c9ccd3"/><path d="M3 9 H9 M3 11.5 H9 M3 14 H9" stroke="#20232b" stroke-width="1"/></svg>
<svg class="a" style="left:1588px;top:13px" width="18" height="18" viewBox="0 0 18 18"><circle cx="9" cy="9" r="7.6" fill="none" stroke="#c9ccd3" stroke-width="1.6"/><path d="M7 5.5 L12.5 9 L7 12.5Z" fill="#c9ccd3"/></svg>
<svg class="a" style="left:1617px;top:13px" width="19" height="18" viewBox="0 0 19 18"><path d="M1 6 H4.5 L9.5 1.5 V16.5 L4.5 12 H1Z" fill="#c9ccd3"/><path d="M11.5 2.5 A6.5 6.5 0 0 1 11.5 15.5" fill="none" stroke="#70747b" stroke-width="2.2"/><path d="M11 5.5 A3.5 3.5 0 0 1 11 12.5Z" fill="#c9ccd3"/></svg>
<svg class="a" style="left:1647px;top:12px" width="20" height="20" viewBox="0 0 20 20"><path d="M10 0.5 L12.5 3 H17 V7.5 L19.5 10 L17 12.5 V17 H12.5 L10 19.5 L7.5 17 H3 V12.5 L0.5 10 L3 7.5 V3 H7.5Z" fill="#c9ccd3"/><circle cx="10" cy="10" r="4" fill="#20232b"/><circle cx="10" cy="10" r="2.6" fill="#c9ccd3"/></svg>
<svg class="a" style="left:1681px;top:12px" width="12" height="20" viewBox="0 0 12 20"><rect x="0.5" y="0.5" width="11" height="19" rx="1" fill="#c9ccd3"/><rect x="2" y="2.5" width="8" height="13" fill="#20232b"/><circle cx="6" cy="17.5" r="1" fill="#20232b"/></svg>
<svg class="a" style="left:1710px;top:12px" width="14" height="20" viewBox="0 0 14 20"><rect x="3.5" y="0.5" width="7" height="12" rx="3.5" fill="#c9ccd3"/><path d="M1 9 A6 6 0 0 0 13 9 M7 15 V19.5" fill="none" stroke="#c9ccd3" stroke-width="1.8"/></svg>
<svg class="a" style="left:1737px;top:14px" width="19" height="17" viewBox="0 0 19 17"><path d="M1 1 H18 V13.5 H13 V16 H6 V13.5 H1Z" fill="none" stroke="#c9ccd3" stroke-width="1.8"/><path d="M4 2 V5 M7 2 V5 M10 2 V5 M13 2 V5 M15.5 2 V5" stroke="#c9ccd3" stroke-width="1"/></svg>
<svg class="a" style="left:1769px;top:18px" width="12" height="8" viewBox="0 0 12 8"><path d="M1 7 L6 1.5 L11 7Z" fill="#c9ccd3"/></svg>
<div class="a nw" style="left:1799px;top:8px;color:#e2e6ee;font-size:16px;line-height:18px">5:15 PM</div>
<div class="a nw" style="left:1803px;top:24px;color:#e2e6ee;font-size:12.5px;line-height:14px;letter-spacing:0.8px">11/10/25</div>
<svg class="a" style="left:1880px;top:15px" width="16" height="14" viewBox="0 0 16 14"><rect x="0.5" y="0.5" width="15" height="2.5" fill="#dfe3ea"/><path d="M1 4 H15 V13 H12 V10.5 H4 V13 H1Z" fill="#dfe3ea"/></svg>
</div>
</body></html>
